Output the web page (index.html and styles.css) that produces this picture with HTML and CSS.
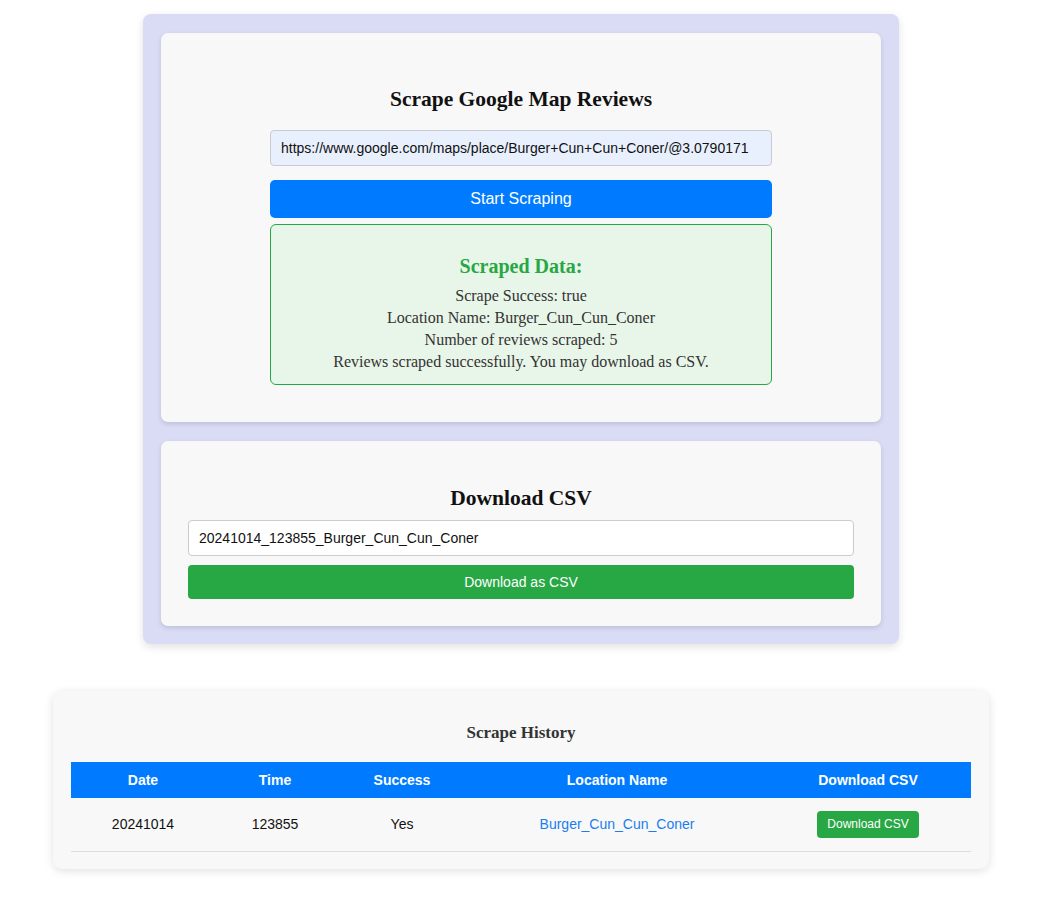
FILE: index.html
```html
<!DOCTYPE html>
<html lang="en">
<head>
<meta charset="utf-8">
<title>Scrape Google Map Reviews</title>
<link rel="stylesheet" href="styles.css">
</head>
<body>
<div class="page">
  <div class="panel">
    <section class="card card-scrape">
      <h2 class="card-title">Scrape Google Map Reviews</h2>
      <input class="url-input" type="text" value="https://www.google.com/maps/place/Burger+Cun+Cun+Coner/@3.0790171">
      <button class="btn btn-primary" type="button">Start Scraping</button>
      <div class="result">
        <h3 class="result-title">Scraped Data:</h3>
        <p class="result-line">Scrape Success: true</p>
        <p class="result-line">Location Name: Burger_Cun_Cun_Coner</p>
        <p class="result-line">Number of reviews scraped: 5</p>
        <p class="result-line">Reviews scraped successfully. You may download as CSV.</p>
      </div>
    </section>
    <section class="card card-download">
      <h2 class="card-title">Download CSV</h2>
      <input class="file-input" type="text" value="20241014_123855_Burger_Cun_Cun_Coner">
      <button class="btn btn-success" type="button">Download as CSV</button>
    </section>
  </div>

  <section class="history">
    <h3 class="history-title">Scrape History</h3>
    <table class="history-table">
      <colgroup>
        <col class="col-date">
        <col class="col-time">
        <col class="col-success">
        <col class="col-location">
        <col class="col-download">
      </colgroup>
      <thead>
        <tr>
          <th>Date</th>
          <th>Time</th>
          <th>Success</th>
          <th>Location Name</th>
          <th>Download CSV</th>
        </tr>
      </thead>
      <tbody>
        <tr>
          <td>20241014</td>
          <td>123855</td>
          <td>Yes</td>
          <td><a class="loc-link" href="#">Burger_Cun_Cun_Coner</a></td>
          <td><button class="btn-small" type="button">Download CSV</button></td>
        </tr>
      </tbody>
    </table>
  </section>
</div>
</body>
</html>
```

FILE: styles.css
```css
* {
  box-sizing: border-box;
}

html, body {
  margin: 0;
  padding: 0;
  background: #ffffff;
}

body {
  font-family: "Liberation Serif", "Times New Roman", serif;
  color: #111;
}

.page {
  padding: 14px 0 40px 2px;
}

.panel {
  width: 756px;
  margin: 0 auto;
  background: #dadcf6;
  border-radius: 8px;
  padding: 19px 18px 18px;
  box-shadow: 0 3px 8px rgba(0, 0, 0, 0.12);
  display: flex;
  flex-direction: column;
  gap: 19px;
}

.card {
  background: #f8f8f8;
  border-radius: 7px;
  box-shadow: 0 2px 5px rgba(0, 0, 0, 0.13);
  display: flex;
  flex-direction: column;
}

.card-title {
  margin: 0;
  font-size: 21.5px;
  line-height: 28px;
  font-weight: bold;
  text-align: center;
  color: #111;
}

.card-scrape {
  padding: 52px 0 37px;
  align-items: center;
}

.card-scrape > * {
  width: 502px;
}

.url-input {
  margin-top: 17px;
  height: 36px;
  padding: 0 10px;
  border: 1px solid #c9cbd2;
  border-radius: 4px;
  background: #e8f0fe;
  font-family: "Liberation Sans", Arial, sans-serif;
  font-size: 14px;
  color: #111;
}

.btn {
  display: block;
  border: none;
  color: #fff;
  font-family: "Liberation Sans", Arial, sans-serif;
  cursor: pointer;
}

.btn-primary {
  margin-top: 14px;
  height: 38px;
  background: #007bff;
  border-radius: 5px;
  font-size: 16px;
}

.result {
  margin-top: 6px;
  border: 1px solid #28a745;
  border-radius: 6px;
  background: #e8f5e9;
  padding: 29px 10px 11px;
  text-align: center;
}

.result-title {
  margin: 0 0 7px;
  font-size: 20px;
  line-height: 24px;
  color: #28a745;
  font-weight: bold;
}

.result-line {
  margin: 0;
  font-size: 16px;
  line-height: 22px;
  color: #333;
}

.card-download {
  padding: 43px 27px 27px;
}

.file-input {
  margin-top: 8px;
  height: 36px;
  padding: 0 10px;
  border: 1px solid #cccccc;
  border-radius: 4px;
  background: #ffffff;
  font-family: "Liberation Sans", Arial, sans-serif;
  font-size: 14px;
  color: #111;
}

.btn-success {
  margin-top: 9px;
  height: 34px;
  width: 100%;
  background: #28a745;
  border-radius: 4px;
  font-size: 14px;
}

.history {
  width: 936px;
  margin: 47px auto 0;
  background: #f8f8f8;
  border-radius: 9px;
  box-shadow: 0 2px 10px rgba(0, 0, 0, 0.12);
  padding: 32px 18px 17px;
}

.history-title {
  margin: 0 0 19px;
  font-size: 17px;
  line-height: 20px;
  font-weight: bold;
  text-align: center;
  color: #333;
}

.history-table {
  width: 900px;
  table-layout: fixed;
  border-collapse: collapse;
  font-family: "Liberation Sans", Arial, sans-serif;
  font-size: 14px;
}

.col-date { width: 144px; }
.col-time { width: 120px; }
.col-success { width: 134px; }
.col-location { width: 296px; }
.col-download { width: 206px; }

.history-table th {
  background: #007bff;
  color: #fff;
  font-weight: bold;
  height: 36px;
  padding: 0 8px;
  text-align: center;
}

.history-table td {
  height: 53px;
  padding: 0 8px;
  text-align: center;
  color: #111;
  border-bottom: 1px solid #dddddd;
  vertical-align: middle;
}

.loc-link {
  color: #1a7ef0;
  text-decoration: none;
}

.btn-small {
  height: 27px;
  padding: 0 10px;
  border: none;
  border-radius: 4px;
  background: #28a745;
  color: #fff;
  font-family: "Liberation Sans", Arial, sans-serif;
  font-size: 12px;
  cursor: pointer;
}
```
